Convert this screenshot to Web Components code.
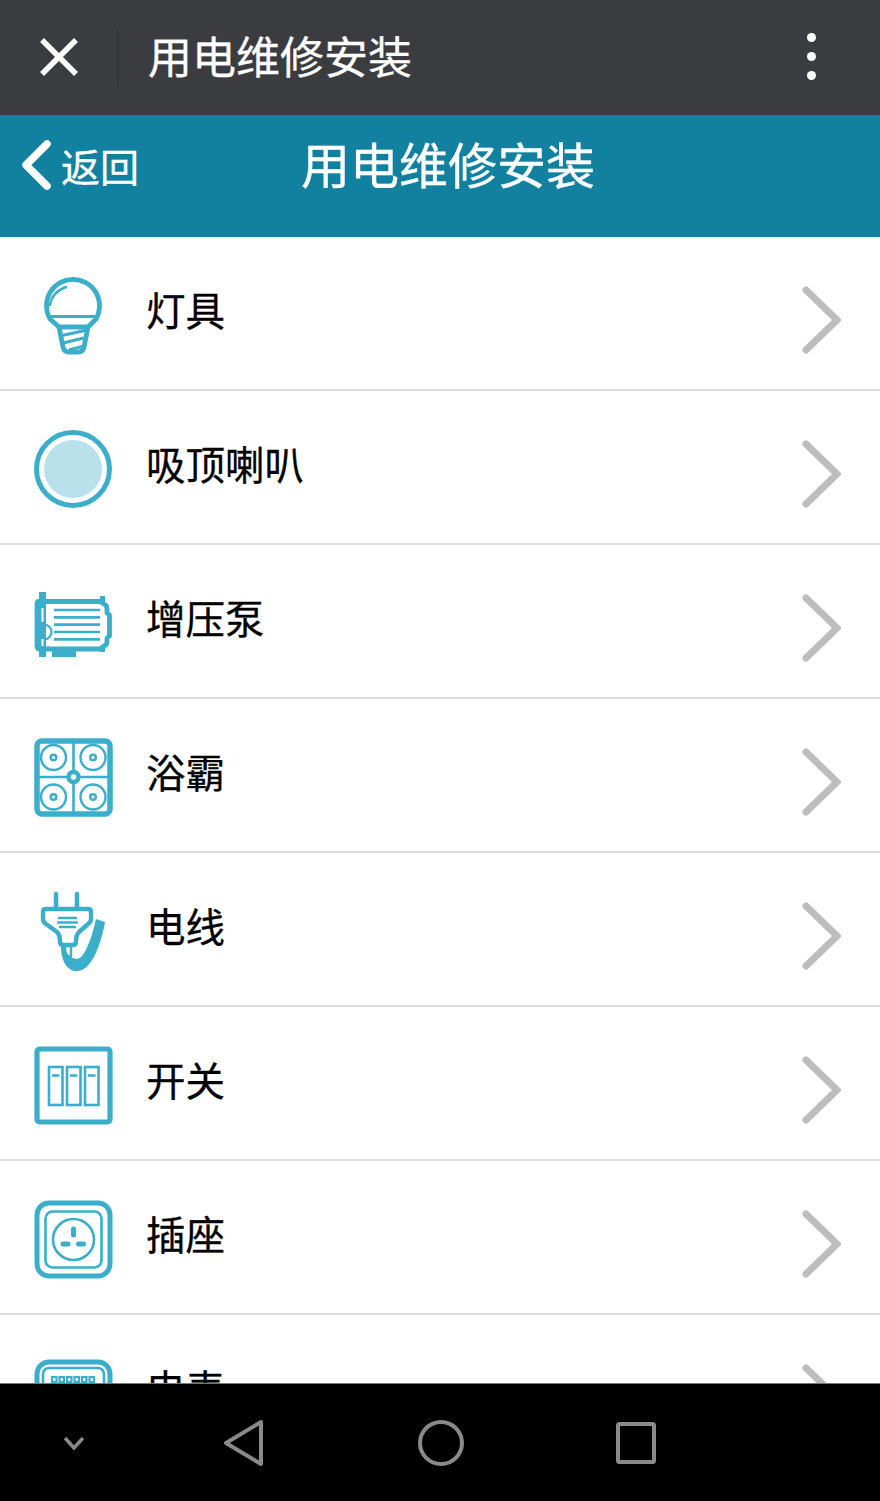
<!DOCTYPE html>
<html lang="zh"><head><meta charset="utf-8">
<style>
html,body{margin:0;padding:0;height:100%;overflow:hidden;background:#000;font-family:"Noto Sans CJK SC","Noto Sans",sans-serif}
</style></head><body>
<app-shell>
  <title-bar slot="top" label="用电维修安装"></title-bar>
  <page-header slot="top" label="用电维修安装" back="返回"></page-header>
  <list-row icon="bulb" label="灯具"></list-row>
  <list-row icon="disc" label="吸顶喇叭"></list-row>
  <list-row icon="pump" label="增压泵"></list-row>
  <list-row icon="bath" label="浴霸"></list-row>
  <list-row icon="plug" label="电线"></list-row>
  <list-row icon="switch" label="开关"></list-row>
  <list-row icon="socket" label="插座"></list-row>
  <list-row icon="meter" label="电表"></list-row>
  <system-nav slot="bottom"></system-nav>
</app-shell>
<script>
const ICONS={
bulb:`<g fill="none" stroke="#3baecb" stroke-linejoin="round"><path d="M16 43A26.500 26.500 0 1 1 62 43L54 51H25z" stroke-width="4.800"/><path d="M14 40.500h50" stroke-width="3"/><path d="M25 51l4 20q1 5 6 5h9q5 0 6-5l4-20" stroke-width="4.800"/><path d="M28 59.500l23-5M29.500 67l20-5M35 74l13-3.500" stroke-width="3"/><path d="M16 29Q18 16 32 11" stroke-width="2.400" stroke-linecap="round"/></g>`,
disc:`<circle cx="39" cy="39" r="36.500" fill="none" stroke="#3baecb" stroke-width="5"/><circle cx="39" cy="39" r="29" fill="#b9e1ec"/>`,
pump:`<g fill="none" stroke="#3baecb" stroke-linejoin="round"><path d="M5 17.500H66L70 20Q73 21 73 25v4l2.500 2V52L73 54v4Q73 61 70 62L66 65H5Q3 65 3 62V20Q3 17.500 5 17.500z" stroke-width="4.800"/><path d="M20 26h46M20 33.300h46M20 40.600h46M20 48h46M20 55.300h46" stroke-width="2.700"/><circle cx="10" cy="48" r="7.500" stroke-width="2.200"/></g><path fill="#3baecb" d="M5 8h7v65H5zM18 63h24v10H18zM66 12h5v6h-5zM66 63h5v5h-5z"/><path fill="#fff" d="M7.500 24h2v14h-2zM7.500 55h2v7h-2z"/>`,
bath:`<rect x="3" y="3" width="73" height="73" rx="5" fill="none" stroke="#3baecb" stroke-width="5.500"/><path d="M39.500 3v73M3 39h73" stroke="#3baecb" stroke-width="2.600"/><g fill="none" stroke="#3baecb"><g stroke-width="2.400"><circle cx="19.500" cy="19.500" r="12.500"/><circle cx="59" cy="19.500" r="12.500"/><circle cx="19.500" cy="59" r="12.500"/><circle cx="59" cy="59" r="12.500"/></g><g stroke-width="2.500"><circle cx="19.500" cy="19.500" r="2.800"/><circle cx="59" cy="19.500" r="2.800"/><circle cx="19.500" cy="59" r="2.800"/><circle cx="59" cy="59" r="2.800"/></g></g><circle cx="39.500" cy="39" r="5" fill="#fff" stroke="#3baecb" stroke-width="4.500"/>`,
plug:`<g fill="none" stroke="#3baecb" stroke-linecap="round" stroke-linejoin="round"><path d="M22 2v14M43 2v14" stroke-width="4.500"/><path d="M12 17H54q3 0 3 3v7q0 3-3 5L45 40q-3 3-3 8v2q0 3-3 3H29q-3 0-3-3v-2q0-5-3-8L12 32q-3-2-3-5v-7q0-3 3-3z" stroke-width="4.400"/><path d="M25 26h17M24 30.500h19M26 35h15" stroke-width="2.400"/><path d="M31 54v10M37 54v10" stroke-width="2.400"/></g><path fill="#3baecb" d="M27 55C27 71 35 80 44 79 58 78 67 52 71 30L62 27C59 40 54 58 47 65 44 68 38 67 35 63 32 60 32 58 32 55z"/>`,
switch:`<rect x="3" y="3" width="73" height="73" rx="2.500" fill="none" stroke="#3baecb" stroke-width="5.200"/><g fill="none" stroke="#3baecb" stroke-width="2.600"><rect x="15" y="21" width="13.500" height="38"/><rect x="33" y="21" width="13.500" height="38"/><rect x="51" y="21" width="13.500" height="38"/><path d="M18 29.500h7.500M36 29.500h7.500M54 29.500h7.500"/></g>`,
socket:`<g fill="none" stroke="#3baecb"><rect x="3" y="3" width="73" height="73" rx="12" stroke-width="5"/><rect x="11.500" y="11.500" width="56" height="56" rx="7" stroke-width="2.600"/><circle cx="39.500" cy="39.500" r="20.500" stroke-width="2.600"/></g><g fill="#3baecb"><rect x="37" y="26.500" width="5" height="11" rx="2.500"/><rect x="26.500" y="41.500" width="10" height="5" rx="2.500"/><rect x="42" y="41.500" width="10" height="5" rx="2.500"/></g>`,
meter:`<g transform="translate(0 5)"><g fill="none" stroke="#3baecb"><rect x="3" y="3" width="73" height="73" rx="12" stroke-width="5"/><rect x="9" y="9" width="61" height="61" rx="6" stroke-width="2.600"/><g stroke-width="2.200"><rect x="18" y="18" width="4.500" height="5"/><rect x="25.500" y="18" width="4.500" height="5"/><rect x="33" y="18" width="4.500" height="5"/><rect x="40.500" y="18" width="4.500" height="5"/><rect x="48" y="18" width="4.500" height="5"/><rect x="55.500" y="18" width="4.500" height="5"/></g></g></g>`
};
function def(name,html){
  customElements.define(name,class extends HTMLElement{
    constructor(){super();this.attachShadow({mode:"open"});}
    connectedCallback(){
      const a=n=>this.getAttribute(n)||"";
      this.shadowRoot.innerHTML=html(a);
    }
  });
}
def("app-shell",()=>`<style>
:host{display:flex;flex-direction:column;width:880px;height:1501px;overflow:hidden;background:#fff;color:#000}
.list{flex:1 1 0;min-height:0;overflow:hidden;display:block}
::slotted([slot=bottom]){flex:none}
</style><slot name="top"></slot><div class="list"><slot></slot></div><slot name="bottom"></slot>`);
def("title-bar",a=>`<style>
:host{display:flex;align-items:center;height:115px;background:#3b3c3f;color:#fff;flex:none}
.x{width:38px;height:38px;margin:-1px 0 0 40px;flex:none}
.sep{width:2px;height:58px;background:#343538;margin:0 29px 0 39px;flex:none}
.t{font-size:44px;line-height:60px;flex:1;margin-top:-5px;white-space:nowrap;-webkit-text-stroke:.3px #fff}
.dots{display:flex;flex-direction:column;gap:10px;margin:-2px 64px 0 0}
.dots i{width:9px;height:9px;border-radius:50%;background:#fff;display:block}
</style><svg class="x" viewBox="0 0 38 38"><path d="M2 2L36 36M36 2L2 36" stroke="#fff" stroke-width="5.500" fill="none"/></svg><div class="sep"></div><div class="t">${a("label")}</div><div class="dots"><i></i><i></i><i></i></div>`);
def("page-header",a=>`<style>
:host{display:flex;align-items:center;height:122px;box-sizing:border-box;padding-bottom:22px;background:#12809f;color:#fff;flex:none}
svg{width:32px;height:52px;margin:0 0 0 21px;flex:none}
.b{font-size:39px;line-height:52px;margin:0 0 0 8px;white-space:nowrap;-webkit-text-stroke:.3px #fff}
.t{font-size:49px;line-height:66px;margin:-5px 0 0 162px;white-space:nowrap;-webkit-text-stroke:.4px #fff}
</style><svg viewBox="0 0 32 52"><path d="M26 5L5 26L26 47" stroke="#fff" stroke-width="7.500" stroke-linecap="round" stroke-linejoin="round" fill="none"/></svg><div class="b">${a("back")}</div><div class="t">${a("label")}</div>`);
def("list-row",a=>`<style>
:host{display:flex;align-items:flex-start;height:154px;box-sizing:border-box;border-bottom:2px solid #dcdcdc;background:#fff;position:relative}
.i{width:78px;height:78px;margin:39px 0 0 34px;flex:none;overflow:visible}
.l{font-size:39.500px;line-height:52px;margin:46px 0 0 34px;flex:1;white-space:nowrap;color:#000;-webkit-text-stroke:.3px #000}
.c{width:40px;height:70px;margin:48px 39px 0 0;flex:none}
</style><svg class="i" viewBox="0 0 78 78">${ICONS[a("icon")]||""}</svg><div class="l">${a("label")}</div><svg class="c" viewBox="0 0 40 70"><path d="M5 5L36 35L5 65" stroke="#bdbdbd" stroke-width="7" stroke-linecap="round" stroke-linejoin="miter" fill="none"/></svg>`);
def("system-nav",()=>`<style>
:host{display:block;height:118px;background:#000;border-top:1px solid #777;box-sizing:border-box}
.r{display:grid;grid-template-columns:147px 196px 195px 196px;height:100%;align-items:center;justify-items:center}
svg{display:block}
</style><div class="r">
<svg width="24" height="16" viewBox="0 0 24 16"><path d="M3 3L12 13L21 3" stroke="#8a8a8a" stroke-width="3.500" fill="none"/></svg>
<svg width="44" height="48" viewBox="0 0 44 48" ><path d="M38 3V45L3 24z" stroke="#8a8a8a" stroke-width="4" stroke-linejoin="round" fill="none"/></svg>
<svg width="46" height="48" viewBox="0 0 46 48"><circle cx="23" cy="24" r="21" stroke="#8a8a8a" stroke-width="4" fill="none"/></svg>
<svg width="42" height="44" viewBox="0 0 42 44"><rect x="3" y="3" width="36" height="38" rx="1.500" stroke="#8a8a8a" stroke-width="4" fill="none"/></svg>
</div>`);
</script>
</body></html>
